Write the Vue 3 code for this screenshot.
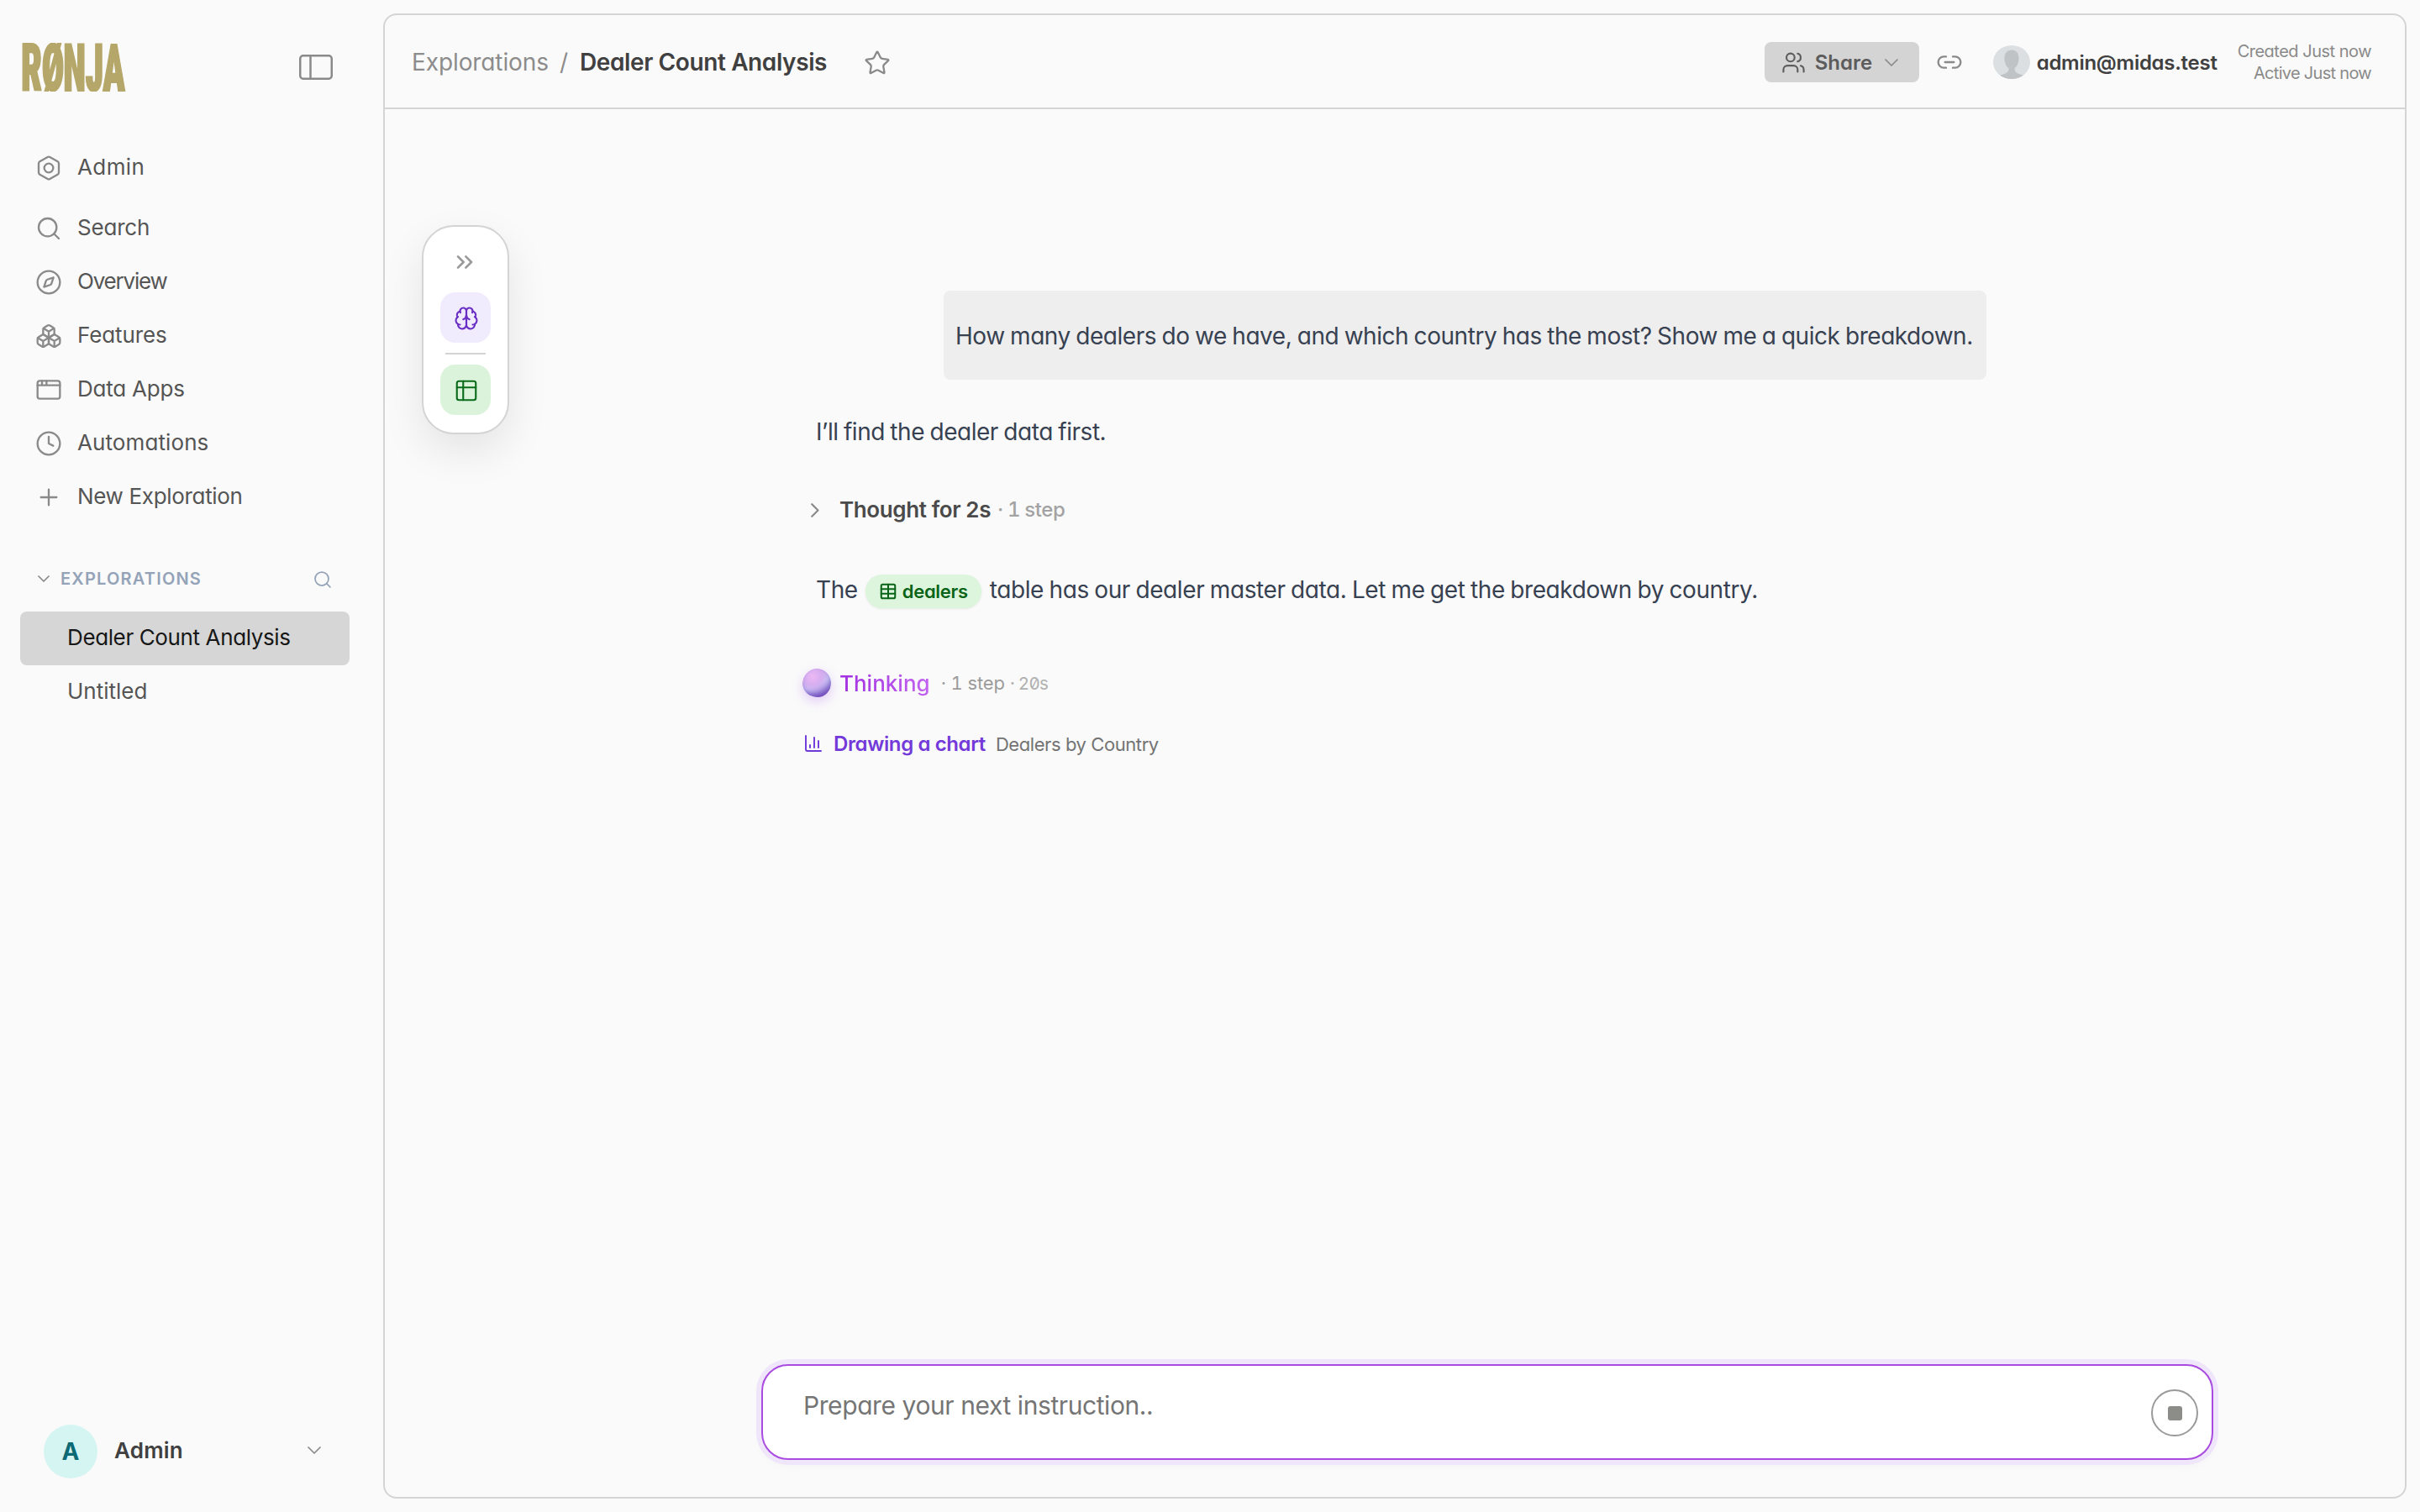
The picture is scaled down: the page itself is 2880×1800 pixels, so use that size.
<script setup>
const adminItem = { label: 'Admin', icon: 'bolt', track: 0.4 }
const items = [
  { label: 'Search', icon: 'search', track: -0.2 },
  { label: 'Overview', icon: 'compass', track: -1.2 },
  { label: 'Features', icon: 'boxes', track: -0.1 },
  { label: 'Data Apps', icon: 'window', track: -0.22 },
  { label: 'Automations', icon: 'clock', track: 0.1 },
  { label: 'New Exploration', icon: 'plus', track: -0.33 },
]
const icons = {
  bolt: '<path d="M21 16V8a2 2 0 0 0-1-1.73l-7-4a2 2 0 0 0-2 0l-7 4A2 2 0 0 0 3 8v8a2 2 0 0 0 1 1.73l7 4a2 2 0 0 0 2 0l7-4A2 2 0 0 0 21 16z"/><circle cx="12" cy="12" r="4"/>',
  search: '<circle cx="11" cy="11" r="8"/><path d="m21 21-4.3-4.3"/>',
  compass: '<circle cx="12" cy="12" r="10"/><path d="m16.24 7.76-1.804 5.411a2 2 0 0 1-1.265 1.265L7.76 16.24l1.804-5.411a2 2 0 0 1 1.265-1.265z"/>',
  boxes: '<path d="M2.97 12.92A2 2 0 0 0 2 14.63v3.24a2 2 0 0 0 .97 1.71l3 1.8a2 2 0 0 0 2.06 0L12 19v-5.5l-5-3-4.03 2.42Z"/><path d="m7 16.5-4.74-2.85M7 16.5l5-3M7 16.5v5.17"/><path d="M12 13.5V19l3.97 2.38a2 2 0 0 0 2.06 0l3-1.8a2 2 0 0 0 .97-1.71v-3.24a2 2 0 0 0-.97-1.71L17 10.5l-5 3Z"/><path d="m17 16.5-5-3M17 16.5l4.74-2.85M17 16.5v5.17"/><path d="M7.97 4.42A2 2 0 0 0 7 6.13v4.37l5 3 5-3V6.13a2 2 0 0 0-.97-1.71l-3-1.8a2 2 0 0 0-2.06 0l-3 1.8Z"/><path d="M12 8 7.26 5.15M12 8l4.74-2.85M12 13.5V8"/>',
  window: '<rect x="2" y="4" width="20" height="16" rx="2"/><path d="M10 4v4M2 8h20M6 4v4"/>',
  clock: '<circle cx="12" cy="12" r="10"/><path d="M12 6v6l4 2"/>',
  plus: '<path d="M5 12h14M12 5v14"/>',
}
</script>

<template>
  <div class="app">
    <aside class="sidebar">
      <div class="brand">
        <div class="logo"><span>RØNJA</span></div>
        <svg class="toggle" viewBox="0 0 40 30"><rect x="1.25" y="1.25" width="37.5" height="27.5" rx="3.5" /><path d="M13.5 1v28" /></svg>
      </div>

      <nav class="nav">
        <a class="item first"><svg class="ico" viewBox="0 0 24 24" v-html="icons[adminItem.icon]" /><span :style="{ letterSpacing: adminItem.track + 'px' }">{{ adminItem.label }}</span></a>
        <a v-for="i in items" :key="i.label" class="item"><svg class="ico" viewBox="0 0 24 24" v-html="icons[i.icon]" /><span :style="{ letterSpacing: i.track + 'px' }">{{ i.label }}</span></a>
      </nav>

      <div class="section">
        <svg class="chev" viewBox="0 0 14 8"><path d="m1 1 6 6 6-6" /></svg>
        <span class="sec-title">EXPLORATIONS</span>
        <svg class="sec-search" viewBox="0 0 24 24" v-html="icons.search" />
      </div>
      <div class="list">
        <a class="entry active">Dealer Count Analysis</a>
        <a class="entry">Untitled</a>
      </div>

      <div class="account">
        <div class="initial">A</div>
        <span class="acc-name">Admin</span>
        <svg class="acc-chev" viewBox="0 0 16 9"><path d="m1 1 7 7 7-7" /></svg>
      </div>
    </aside>

    <main class="main">
      <header class="header">
        <div class="crumbs">
          <span class="crumb">Explorations</span>
          <span class="slash">/</span>
          <span class="title">Dealer Count Analysis</span>
          <svg class="star" viewBox="0 0 24 24"><path d="M11.525 2.295a.53.53 0 0 1 .95 0l2.31 4.679a2.123 2.123 0 0 0 1.595 1.16l5.166.756a.53.53 0 0 1 .294.904l-3.736 3.638a2.123 2.123 0 0 0-.611 1.878l.882 5.14a.53.53 0 0 1-.771.56l-4.618-2.428a2.122 2.122 0 0 0-1.973 0L6.396 21.01a.53.53 0 0 1-.77-.56l.881-5.139a2.122 2.122 0 0 0-.611-1.879L2.16 9.795a.53.53 0 0 1 .294-.906l5.165-.755a2.122 2.122 0 0 0 1.597-1.16z" /></svg>
        </div>
        <button class="share">
          <svg class="users" viewBox="0 0 24 24"><path d="M16 21v-2a4 4 0 0 0-4-4H6a4 4 0 0 0-4 4v2" /><circle cx="9" cy="7" r="4" /><path d="M22 21v-2a4 4 0 0 0-3-3.87M16 3.13a4 4 0 0 1 0 7.75" /></svg>
          <span>Share</span>
          <svg class="share-chev" viewBox="0 0 16 9"><path d="m1 1 7 7 7-7" /></svg>
        </button>
        <svg class="link" viewBox="0 0 24 24"><path d="M9 17H7A5 5 0 0 1 7 7h2M15 7h2a5 5 0 1 1 0 10h-2M8 12h8" /></svg>
        <svg class="avatar" viewBox="0 0 44 40">
          <defs><clipPath id="av"><ellipse cx="22" cy="20" rx="22" ry="20" /></clipPath></defs>
          <g clip-path="url(#av)"><rect width="44" height="40" fill="#dcdfe1" /><path d="M22 5.5c-5.5 0-8.5 4-8.5 9.5 0 6 2 10 5 12 0 5-1.5 6-11.5 9V40h30v-4c-10-3-11.5-4-11.5-9 3-2 5-6 5-12 0-5.5-3-9.5-8.5-9.5z" fill="#bfc3c6" /></g>
        </svg>
        <span class="email">admin@midas.test</span>
        <div class="times"><span>Created Just now</span><span class="active-at">Active Just now</span></div>
      </header>

      <div class="dock">
        <svg class="expand" viewBox="0 0 24 24"><path d="m6 17 5-5-5-5M13 17l5-5-5-5" /></svg>
        <div class="tile brain">
          <svg viewBox="0 0 24 24"><path d="M12 5a3 3 0 1 0-5.997.125 4 4 0 0 0-2.526 5.77 4 4 0 0 0 .556 6.588A4 4 0 1 0 12 18Z" /><path d="M12 5a3 3 0 1 1 5.997.125 4 4 0 0 1 2.526 5.77 4 4 0 0 1-.556 6.588A4 4 0 1 1 12 18Z" /><path d="M15 13a4.5 4.5 0 0 1-3-4 4.5 4.5 0 0 1-3 4M17.599 6.5a3 3 0 0 0 .399-1.375M6.003 5.125A3 3 0 0 0 6.401 6.5M3.477 10.896a4 4 0 0 1 .585-.396M19.938 10.5a4 4 0 0 1 .585.396M6 18a4 4 0 0 1-1.967-.516M19.967 17.484A4 4 0 0 1 18 18" /></svg>
        </div>
        <div class="rule"></div>
        <div class="tile table">
          <svg viewBox="0 0 24 24"><rect x="3" y="3" width="18" height="18" rx="2" /><path d="M3 9h18M9 3v18" /></svg>
        </div>
      </div>

      <section class="chat">
        <div class="bubble">How many dealers do we have, and which country has the most? Show me a quick breakdown.</div>
        <p class="line l1">I’ll find the dealer data first.</p>
        <div class="step thought">
          <svg class="right" viewBox="0 0 10 17"><path d="m1.25 1.25 7.25 7.25-7.25 7.25" /></svg>
          <span class="thought-t">Thought for 2s</span>
          <span class="thought-m">· 1 step</span>
        </div>
        <p class="line l2">
          <span>The</span>
          <span class="pill"><svg viewBox="0 0 24 24"><rect x="3" y="3" width="18" height="18" rx="2" /><path d="M12 3v18M3 9h18M3 15h18" /></svg>dealers</span>
          <span>table has our dealer master data. Let me get the breakdown by country.</span>
        </p>
        <div class="step thinking">
          <span class="orb"></span>
          <span class="think-t">Thinking</span>
          <span class="think-m">· 1 step</span>
          <span class="think-s">· <i>20s</i></span>
        </div>
        <div class="step drawing">
          <svg class="bars" viewBox="0 0 24 24"><path d="M3 3v16a2 2 0 0 0 2 2h16M18 17V9M13 17V5M8 17v-3" /></svg>
          <span class="draw-t">Drawing a chart</span>
          <span class="draw-m">Dealers by Country</span>
        </div>
      </section>

      <div class="composer">
        <span class="ph">Prepare your next instruction..</span>
        <div class="stop"><i></i></div>
      </div>
    </main>
  </div>
</template>

<style>
body { background: #fafafa; }
</style>

<style scoped>
.app { display: flex; width: 2880px; height: 1800px; box-sizing: border-box; padding: 16px 16px 16px 0; background: #fafafa; font-family: Inter, "Liberation Sans", sans-serif; font-feature-settings: "cv11"; color: #555; white-space: nowrap; overflow: hidden; }
svg { display: block; flex: none; fill: none; stroke: currentColor; stroke-width: 1.75; stroke-linecap: round; stroke-linejoin: round; }
.sidebar { width: 456px; flex: none; display: flex; flex-direction: column; box-sizing: border-box; }

.brand { display: flex; justify-content: space-between; align-items: center; margin: 35px 60px 0 26px; height: 58px; }
.logo { width: 124px; height: 58px; clip-path: inset(0); }
.logo span { display: block; width: max-content; font: 900 78px/61px Roboto, sans-serif; font-stretch: 75%; letter-spacing: -1px; color: #b5a769; -webkit-text-stroke: 2px #b5a769; transform-origin: 0 50%; transform: translateX(-1px) scaleX(.565); }
.toggle { width: 40px; height: 30px; color: #8a8a8a; stroke-width: 2.5; }

.nav { display: flex; flex-direction: column; margin-top: 59px; }
.item { display: flex; align-items: center; height: 64px; padding-left: 42px; font-size: 26px; color: #555; }
.item.first { margin-bottom: 8px; }
.item span { margin-left: 18px; padding-bottom: 3px; }
.ico { width: 32px; height: 32px; color: #8a8a8a; }

.section { display: flex; align-items: center; height: 40px; margin-top: 45px; padding: 0 60px 0 45px; color: #94a3b8; }
.chev { width: 14px; height: 8px; color: #8a8a8a; }
.sec-title { margin-left: 13px; font-size: 20px; font-weight: 600; letter-spacing: 1.2px; }
.sec-search { width: 24px; height: 24px; margin: 2px 0 0 auto; }
.list { margin-top: 19px; padding: 0 40px 0 24px; }
.entry { display: flex; align-items: center; height: 64px; box-sizing: border-box; padding: 0 0 3px 56px; border-radius: 8px; font-size: 26px; }
.active { background: #d6d6d6; color: #171717; letter-spacing: -.38px; }

.account { display: flex; align-items: center; height: 64px; margin: auto 74px 24px 52px; }
.initial { width: 64px; height: 64px; border-radius: 50%; background: #d5f5f3; color: #0b6a73; font-size: 28px; font-weight: 700; line-height: 64px; text-align: center; }
.acc-name { margin-left: 20px; padding-bottom: 3px; font-size: 26px; font-weight: 600; color: #404040; letter-spacing: .2px; }
.acc-chev { width: 16px; height: 9px; margin-left: auto; margin-bottom: 4px; color: #8a8a8a; }

.main { position: relative; flex: 1; display: flex; flex-direction: column; border: 2px solid #d4d4d4; border-radius: 16px; box-sizing: border-box; }
.header { display: flex; align-items: center; height: 112px; flex: none; box-sizing: border-box; border-bottom: 2px solid #d4d4d4; padding: 2px 40px 0 32px; }
.crumbs { display: flex; align-items: center; flex: 1; font-size: 28px; color: #8c8c8c; }
.crumb { letter-spacing: -.1px; }
.slash { margin: 0 14px 0 13px; }
.title { font-weight: 600; color: #404040; letter-spacing: -.39px; }
.star { width: 32px; height: 32px; margin: 2px 0 0 44px; color: #8a8a8a; }
.share { display: flex; align-items: center; width: 184px; height: 48px; padding: 0 0 0 20px; border: 0; border-radius: 8px; background: #d4d4d4; color: #5c5c5c; font: 600 24px Inter, sans-serif; font-feature-settings: "cv11"; }
.users { width: 29px; height: 29px; }
.share span { margin-left: 11px; }
.share-chev { width: 16px; height: 9px; margin-left: 15px; color: #8a8a8a; }
.link { width: 32px; height: 32px; margin-left: 20px; color: #8a8a8a; }
.avatar { width: 44px; height: 40px; margin-left: 36px; stroke: none; }
.email { margin-left: 8px; font-size: 24px; font-weight: 600; color: #404040; letter-spacing: -.27px; }
.times { display: flex; flex-direction: column; align-items: flex-end; margin-left: 24px; font-size: 20px; line-height: 26px; color: #8a8a8a; letter-spacing: -.5px; }
.active-at { letter-spacing: -.7px; }

.dock { position: absolute; left: 44px; top: 250px; width: 104px; height: 249px; box-sizing: border-box; display: flex; flex-direction: column; align-items: center; background: #fff; border: 2px solid #d4d4d4; border-radius: 38px; box-shadow: 0 20px 50px rgba(0, 0, 0, .09); }
.expand { width: 32px; height: 32px; margin: 26px 2px 0 0; color: #9a9a9a; stroke-width: 2; }
.tile { display: flex; align-items: center; justify-content: center; width: 60px; height: 60px; box-sizing: border-box; padding: 2px 0 0 2px; border-radius: 18px; }
.tile svg { width: 30px; height: 30px; stroke-width: 1.7; }
.brain { margin-top: 20px; background: #f1ebfe; color: #6a2fc4; }
.rule { width: 48px; height: 2px; margin: 12px 0; background: #d4d4d4; }
.table { background: #dbf3db; color: #0a6b1a; }

.chat { display: flex; flex-direction: column; margin: 216px 0 0 496px; width: 1410px; }
.bubble { align-self: flex-end; width: 1241px; height: 106px; box-sizing: border-box; padding: 1px 0 0 14px; border-radius: 8px; background: #eee; color: #374151; font-size: 28px; line-height: 106px; letter-spacing: -.45px; word-spacing: -1px; }
.line { display: flex; align-items: center; margin: 40px 0 0; height: 44px; padding-left: 17px; font-size: 28px; color: #374151; letter-spacing: -.4px; word-spacing: -1px; }
.l1 { letter-spacing: -.46px; }
.l2 { margin-top: 56px; }
.pill { display: inline-flex; align-items: center; box-sizing: border-box; width: 138px; height: 40px; margin: 4px 10px 0 9px; padding-left: 16px; border-radius: 20px; background: #dcf5dc; color: #0a6418; font-size: 22px; font-weight: 600; letter-spacing: -.3px; box-shadow: 0 1px 3px rgba(0, 100, 0, .1); }
.pill svg { width: 22px; height: 22px; stroke-width: 2.2; margin-right: 6px; }
.step { display: flex; align-items: center; height: 36px; }
.thought { margin-top: 52px; padding-left: 11px; }
.right { width: 10px; height: 17px; margin-top: 3px; color: #8a8a8a; stroke-width: 2.2; }
.thought-t { margin-left: 24px; font-size: 26px; font-weight: 600; color: #4a4a4a; letter-spacing: -.38px; }
.thought-m { margin-left: 8px; padding-top: 1px; font-size: 24px; font-weight: 500; color: #a3a3a3; letter-spacing: -.4px; word-spacing: -1px; font-feature-settings: "cv11", "tnum", "zero"; }
.thinking { margin-top: 71px; }
.orb { width: 34px; height: 34px; margin-left: 1px; border-radius: 50% 50% 46% 54% / 54% 50% 50% 46%; background: radial-gradient(circle at 36% 28%, #edb8f3 0%, #d6aef0 30%, rgba(196, 176, 240, 0) 62%), linear-gradient(155deg, #d3a0ec 15%, #c3c4f5 52%, #7c56c4 90%); box-shadow: 0 5px 14px rgba(168, 85, 247, .28), inset -1px -3px 5px rgba(90, 50, 170, .4); }
.think-t { margin-left: 10px; font-size: 26px; font-weight: 500; background: linear-gradient(90deg, #a22fe0, #c264f0); -webkit-background-clip: text; background-clip: text; color: transparent; }
.think-m, .think-s { margin-left: 13px; font-size: 22px; color: #9c9c9c; letter-spacing: -.15px; font-feature-settings: "cv11", "tnum", "zero"; }
.think-s { margin-left: 6px; color: #b0b0b0; word-spacing: -2px; }
.think-s i { font-style: normal; font-size: 20.5px; letter-spacing: -.6px; }
.drawing { margin-top: 36px; }
.bars { width: 24px; height: 24px; margin-left: 2px; color: #6d38d8; stroke-width: 1.9; }
.draw-t { margin-left: 12px; font-size: 24px; font-weight: 600; color: #7339d9; letter-spacing: -.38px; }
.draw-m { margin-left: 12px; padding-top: 1px; font-size: 22px; color: #737373; letter-spacing: -.42px; }

.composer { display: flex; justify-content: space-between; width: 1728px; height: 114px; box-sizing: border-box; margin: auto 0 44px 448px; border: 2px solid #a94be0; border-radius: 32px; background: #fff; box-shadow: 0 0 0 6px #efe6fb, 0 6px 12px rgba(0, 0, 0, .04); padding: 28px 16px 0 48px; }
.ph { margin-top: -1px; font-size: 30px; line-height: 40px; color: #757575; letter-spacing: -.42px; }
.stop { display: flex; align-items: center; justify-content: center; width: 56px; height: 56px; box-sizing: border-box; border: 2px solid #9a9a9a; border-radius: 50%; }
.stop i { width: 17px; height: 17px; border-radius: 3px; background: #8c8c88; }
</style>
